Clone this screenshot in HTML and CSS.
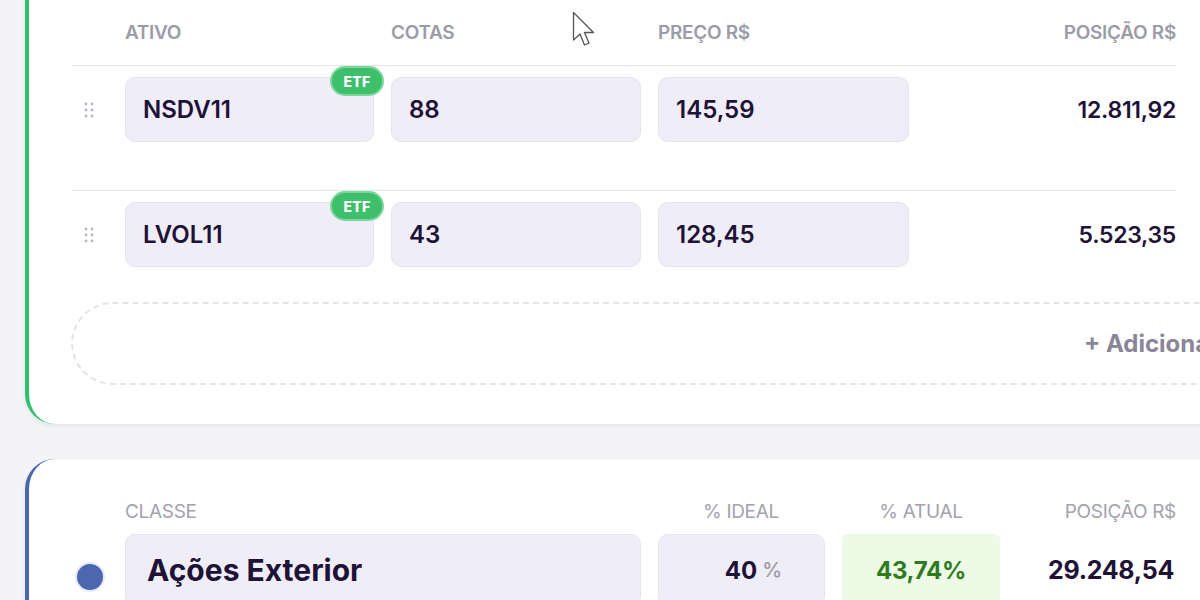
FILE: index.html
```html
<!DOCTYPE html>
<html lang="pt-BR">
<head>
<meta charset="utf-8">
<title>Carteira</title>
<link rel="stylesheet" href="styles.css">
</head>
<body>
<div class="page">
  <section class="card card-green">
    <div class="grid head">
      <span></span>
      <span>ATIVO</span>
      <span>COTAS</span>
      <span>PREÇO R$</span>
      <span class="right">POSIÇÃO R$</span>
    </div>
    <div class="grid row">
      <span class="handle"><svg width="10" height="16" viewBox="0 0 10 16"><circle cx="2" cy="2" r="1.4"/><circle cx="8" cy="2" r="1.4"/><circle cx="2" cy="8" r="1.4"/><circle cx="8" cy="8" r="1.4"/><circle cx="2" cy="14" r="1.4"/><circle cx="8" cy="14" r="1.4"/></svg></span>
      <div class="field field-ativo">NSDV11<span class="badge">ETF</span></div>
      <div class="field">88</div>
      <div class="field">145,59</div>
      <div class="pos">12.811,92</div>
    </div>
    <div class="grid row row-last">
      <span class="handle"><svg width="10" height="16" viewBox="0 0 10 16"><circle cx="2" cy="2" r="1.4"/><circle cx="8" cy="2" r="1.4"/><circle cx="2" cy="8" r="1.4"/><circle cx="8" cy="8" r="1.4"/><circle cx="2" cy="14" r="1.4"/><circle cx="8" cy="14" r="1.4"/></svg></span>
      <div class="field field-ativo">LVOL11<span class="badge">ETF</span></div>
      <div class="field">43</div>
      <div class="field">128,45</div>
      <div class="pos">5.523,35</div>
    </div>
    <div class="add">+ Adicionar ativo</div>
  </section>

  <section class="card card-blue">
    <div class="grid2 head2">
      <span></span>
      <span>CLASSE</span>
      <span class="ideal-h">% IDEAL</span>
      <span class="center">% ATUAL</span>
      <span class="right">POSIÇÃO R$</span>
    </div>
    <div class="grid2 row2">
      <span class="dot"></span>
      <div class="field big">Ações Exterior</div>
      <div class="field ideal"><b>40</b><span class="pct">%</span></div>
      <div class="atual">43,74%</div>
      <div class="pos big-pos">29.248,54</div>
    </div>
  </section>

  <svg class="cursor" width="24" height="37" viewBox="0 0 24 37"><path d="M1.5 1.5 L1.5 29 L8 23 L12.5 34 L17 32 L12.5 21.5 L21.5 21.5 Z" fill="#fff" stroke="#555" stroke-width="1.3" stroke-linejoin="round"/></svg>
</div>
</body>
</html>
```

FILE: styles.css
```css
html, body {
  margin: 0;
  padding: 0;
  background: #f4f4f7;
  overflow: hidden;
  height: 600px;
}
body {
  font-family: Inter, "Noto Sans", sans-serif;
  color: #1d1233;
}
.page {
  position: relative;
  display: flow-root;
  padding-left: 25px;
  width: 1400px;
}
.card {
  background: #fff;
  width: 1300px;
  box-sizing: border-box;
  border-radius: 30px;
  box-shadow: 0 2px 4px rgba(30, 20, 60, 0.07);
  padding-left: 43px;
}
.card-green {
  margin-top: -30px;
  border-left: 4px solid #2fc06c;
  padding-top: 50px;
  padding-bottom: 39px;
}
.card-blue {
  margin-top: 35px;
  border-left: 4px solid #4a67ad;
  padding-top: 40px;
  height: 300px;
}
.grid {
  width: 1104px;
  display: grid;
  grid-template-columns: 36px 249px 250px 251px 1fr;
  column-gap: 17px;
}
.grid2 {
  width: 1104px;
  display: grid;
  grid-template-columns: 36px 516px 167px 158px 1fr;
  column-gap: 17px;
}
.head {
  font-size: 19px;
  font-weight: 600;
  line-height: 26px;
  color: #9c9ba8;
  letter-spacing: -0.3px;
  padding-bottom: 19px;
}
.head2 {
  font-size: 19px;
  font-weight: 400;
  line-height: 26px;
  color: #a3a2ad;
  letter-spacing: -0.3px;
  padding-bottom: 9px;
}
.right { text-align: right; }
.center { text-align: center; }
.ideal-h { text-align: right; padding-right: 46px; }
.row {
  border-top: 1.5px solid #e6e5ec;
  padding-top: 11px;
  padding-bottom: 48px;
  align-items: center;
}
.row.row-last { padding-bottom: 35px; }
.handle {
  display: flex;
  align-items: center;
  padding-left: 12px;
}
.handle svg { fill: #b8b5c4; }
.field {
  position: relative;
  height: 65px;
  box-sizing: border-box;
  background: #efedf7;
  border: 1px solid #e6e3ef;
  border-radius: 10px;
  display: flex;
  align-items: center;
  padding-left: 17px;
  font-size: 24px;
  font-weight: 600;
  color: #1e1236;
}
.badge {
  position: absolute;
  top: -12px;
  right: -11px;
  width: 54px;
  height: 30px;
  box-sizing: border-box;
  border-radius: 15px;
  background: #3dbf6b;
  border: 2px solid #7bd79c;
  color: #fff;
  font-size: 14px;
  font-weight: 800;
  display: flex;
  align-items: center;
  justify-content: center;
  letter-spacing: 0.3px;
}
.pos {
  text-align: right;
  font-size: 23px;
  font-weight: 600;
  color: #1e1236;
  letter-spacing: -0.3px;
}
.add {
  height: 83px;
  box-sizing: border-box;
  margin-left: -1px;
  border: 2px dashed #e4e3ea;
  border-right: none;
  border-radius: 42px 0 0 42px;
  display: flex;
  align-items: center;
  padding-left: 1011px;
  font-size: 24px;
  font-weight: 700;
  color: #8a8597;
  white-space: nowrap;
}
.row2 { align-items: center; }
.dot {
  width: 26px;
  height: 26px;
  border-radius: 50%;
  background: #4a67b0;
  margin-left: 5px;
  margin-top: 14px;
  box-shadow: 0 0 0 2px #e6eaf5;
}
.big {
  height: 72px;
  font-size: 30px;
  font-weight: 700;
  padding-left: 21px;
}
.ideal {
  height: 72px;
  justify-content: flex-end;
  padding-right: 42px;
  font-size: 24px;
}
.ideal b { font-weight: 700; }
.pct {
  font-size: 20px;
  font-weight: 500;
  color: #9c98a8;
  margin-left: 5px;
}
.atual {
  height: 72px;
  background: #edfbe6;
  border-radius: 6px;
  display: flex;
  align-items: center;
  justify-content: center;
  font-size: 24px;
  font-weight: 700;
  color: #2f7a1f;
  letter-spacing: -0.3px;
}
.big-pos {
  font-size: 25px;
  font-weight: 700;
  padding-right: 2px;
}
.cursor {
  position: absolute;
  left: 572px;
  top: 11px;
}
```
